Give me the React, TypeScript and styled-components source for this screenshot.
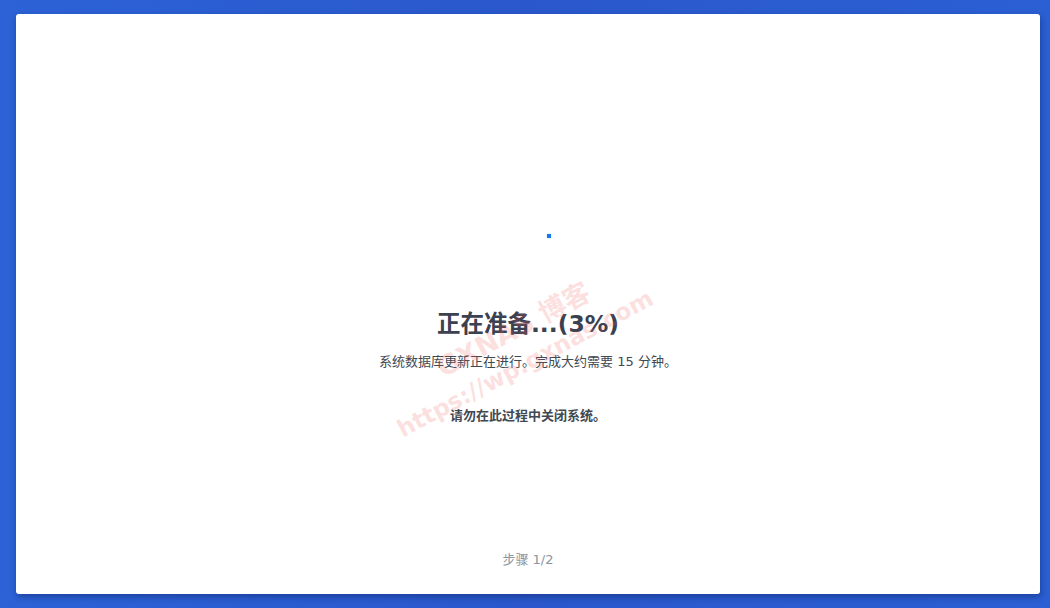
import React from "react";
import styled, { createGlobalStyle } from "styled-components";

const GlobalStyle = createGlobalStyle`
  html, body {
    margin: 0;
    padding: 0;
    width: 1050px;
    height: 608px;
    overflow: hidden;
  }
  body {
    background: linear-gradient(90deg, #2c62d6 0%, #2a58cc 50%, #2b5fd3 100%);
    font-family: "DejaVu Sans", "Noto Sans CJK SC", sans-serif;
  }
`;

const Screen = styled.div`
  box-sizing: border-box;
  width: 1050px;
  height: 608px;
  padding: 14px 10px 14px 16px;
  display: flex;
`;

const Card = styled.div`
  position: relative;
  flex: 1;
  background: #ffffff;
  border-radius: 3px;
  box-shadow: 1px 3px 6px rgba(10, 30, 90, 0.45);
  display: flex;
  flex-direction: column;
  align-items: center;
  overflow: hidden;
`;

const Main = styled.div`
  flex: 1;
  display: flex;
  flex-direction: column;
  align-items: center;
  padding-top: 220px;
`;

const Spinner = styled.div`
  width: 4px;
  height: 4px;
  margin-left: 42px;
  background: #1779e6;
  box-shadow: 0 0 2px rgba(23, 121, 230, 0.4);
`;

const Title = styled.h1`
  margin: 70px 0 0;
  font-size: 23.5px;
  line-height: 32px;
  font-weight: bold;
  color: #3b4150;
`;

const Text = styled.p<{ $bold?: boolean; $gap: number }>`
  margin: ${(p) => p.$gap}px 0 0;
  font-size: 13px;
  line-height: 20px;
  font-weight: ${(p) => (p.$bold ? "bold" : "normal")};
  color: #414852;
`;

const Footer = styled.div`
  padding-bottom: 24px;
  font-size: 13px;
  line-height: 20px;
  color: #8c95a0;
`;

const Watermark = styled.div`
  position: absolute;
  left: 358px;
  top: 370px;
  transform: rotate(-28deg);
  transform-origin: left top;
  display: flex;
  flex-direction: column;
  align-items: flex-start;
  font-family: "DejaVu Sans", "Noto Sans CJK SC", sans-serif;
  font-weight: bold;
  color: rgba(240, 90, 90, 0.2);
  pointer-events: none;
  white-space: nowrap;
`;

const WatermarkLine = styled.span<{ $indent: number; $size: number; $lh: number }>`
  margin-left: ${(p) => p.$indent}px;
  font-size: ${(p) => p.$size}px;
  line-height: ${(p) => p.$lh}px;
`;

export default function App() {
  return (
    <>
      <GlobalStyle />
      <Screen>
        <Card>
          <Main>
            <Spinner />
            <Title>正在准备...(3%)</Title>
            <Text $gap={12}>系统数据库更新正在进行。完成大约需要 15 分钟。</Text>
            <Text $gap={34} $bold>
              请勿在此过程中关闭系统。
            </Text>
          </Main>
          <Footer>步骤 1/2</Footer>
          <Watermark>
            <WatermarkLine $indent={64} $size={27} $lh={36}>
              GXNAS 博客
            </WatermarkLine>
            <WatermarkLine $indent={0} $size={23.5} $lh={34}>
              https://wp.gxnas.com
            </WatermarkLine>
          </Watermark>
        </Card>
      </Screen>
    </>
  );
}
